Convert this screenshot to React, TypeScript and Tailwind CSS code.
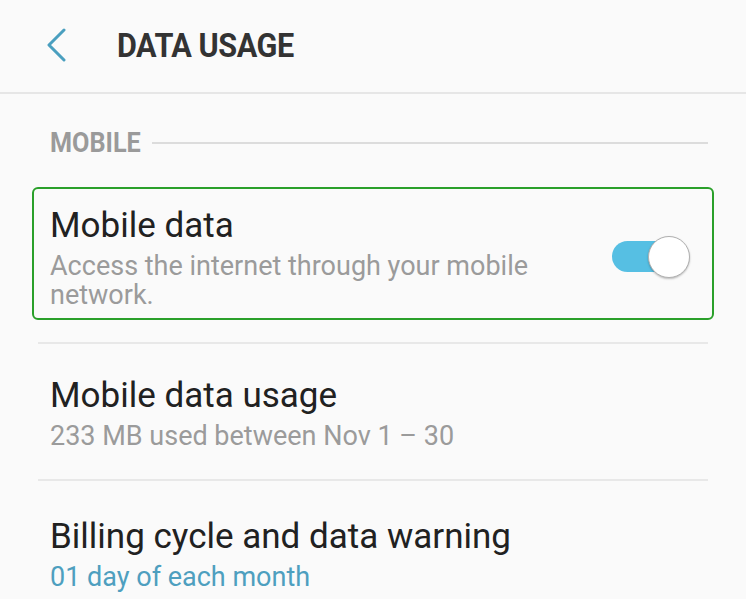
import { FC, ReactNode } from "react";

const font = { fontFamily: "Roboto, 'Noto Sans', sans-serif" };

interface RowProps {
  title: string;
  subtitle: ReactNode;
  subtitleClass?: string;
  right?: ReactNode;
}

const Row: FC<RowProps> = ({ title, subtitle, subtitleClass = "text-[#9b9b9b]", right }) => {
  return (
    <div className="flex items-center justify-between">
      <div className="flex flex-col">
        <div className="text-[35px] leading-[40px] text-[#212121]">{title}</div>
        <div className={`mt-[6px] text-[27px] leading-[29px] ${subtitleClass}`}>{subtitle}</div>
      </div>
      {right}
    </div>
  );
};

const Toggle: FC = () => {
  return (
    <div className="relative w-[78px] h-[44px] mr-[22px] shrink-0">
      {/* track */}
      <div className="absolute left-0 top-[5px] w-[64px] h-[31px] rounded-full bg-[#56bfe3]"></div>
      {/* thumb */}
      <div className="absolute right-0 top-0 w-[42px] h-[42px] rounded-full bg-white border border-[#b0b0b0] shadow-[0_1px_2px_rgba(0,0,0,0.25)]"></div>
    </div>
  );
};

export default function App() {
  return (
    <div className="w-[746px] h-[599px] overflow-hidden bg-[#fafafa]" style={font}>
      {/* Header */}
      <div className="h-[94px] flex items-center border-b-2 border-[#e6e6e6]">
        <svg width="22" height="34" viewBox="0 0 22 34" className="ml-[45px] mt-[-2px]" fill="none">
          <path d="M19 2 L4 17 L19 32" stroke="#4a9fbf" strokeWidth="3" strokeLinecap="round" strokeLinejoin="round" />
        </svg>
        <div className="ml-[50px] mt-[-3px] text-[34px] leading-[40px] font-bold text-[#333333] tracking-[-0.5px] origin-left scale-x-[0.9]">
          DATA USAGE
        </div>
      </div>

      {/* Section header */}
      <div className="pt-[35px] pb-[30px] pl-[50px] pr-[38px] flex items-center">
        <div className="text-[28px] leading-[28px] font-bold text-[#9a9a9a] origin-left scale-x-[0.9] w-[92px] shrink-0">
          MOBILE
        </div>
        <div className="ml-[10px] flex-1 h-[2px] bg-[#dcdcdc]"></div>
      </div>

      <div className="px-[38px]">
        {/* Mobile data (highlighted) */}
        <div className="mx-[-6px] border-2 border-[#2aa02a] rounded-[6px] pt-[17px] pb-[8px] pl-[16px]">
          <Row
            title="Mobile data"
            subtitle={
              <>
                Access the internet through your mobile
                <br />
                network.
              </>
            }
            right={<Toggle />}
          />
        </div>

        <div className="mt-[22px] h-[2px] bg-[#e8e8e8]"></div>

        <div className="pt-[32px] pb-[28px] pl-[12px]">
          <Row title="Mobile data usage" subtitle="233 MB used between Nov 1 – 30" />
        </div>

        <div className="h-[2px] bg-[#e8e8e8]"></div>

        <div className="pt-[36px] pb-[28px] pl-[12px]">
          <Row title="Billing cycle and data warning" subtitle="01 day of each month" subtitleClass="text-[#4e9fbf]" />
        </div>
      </div>
    </div>
  );
}
